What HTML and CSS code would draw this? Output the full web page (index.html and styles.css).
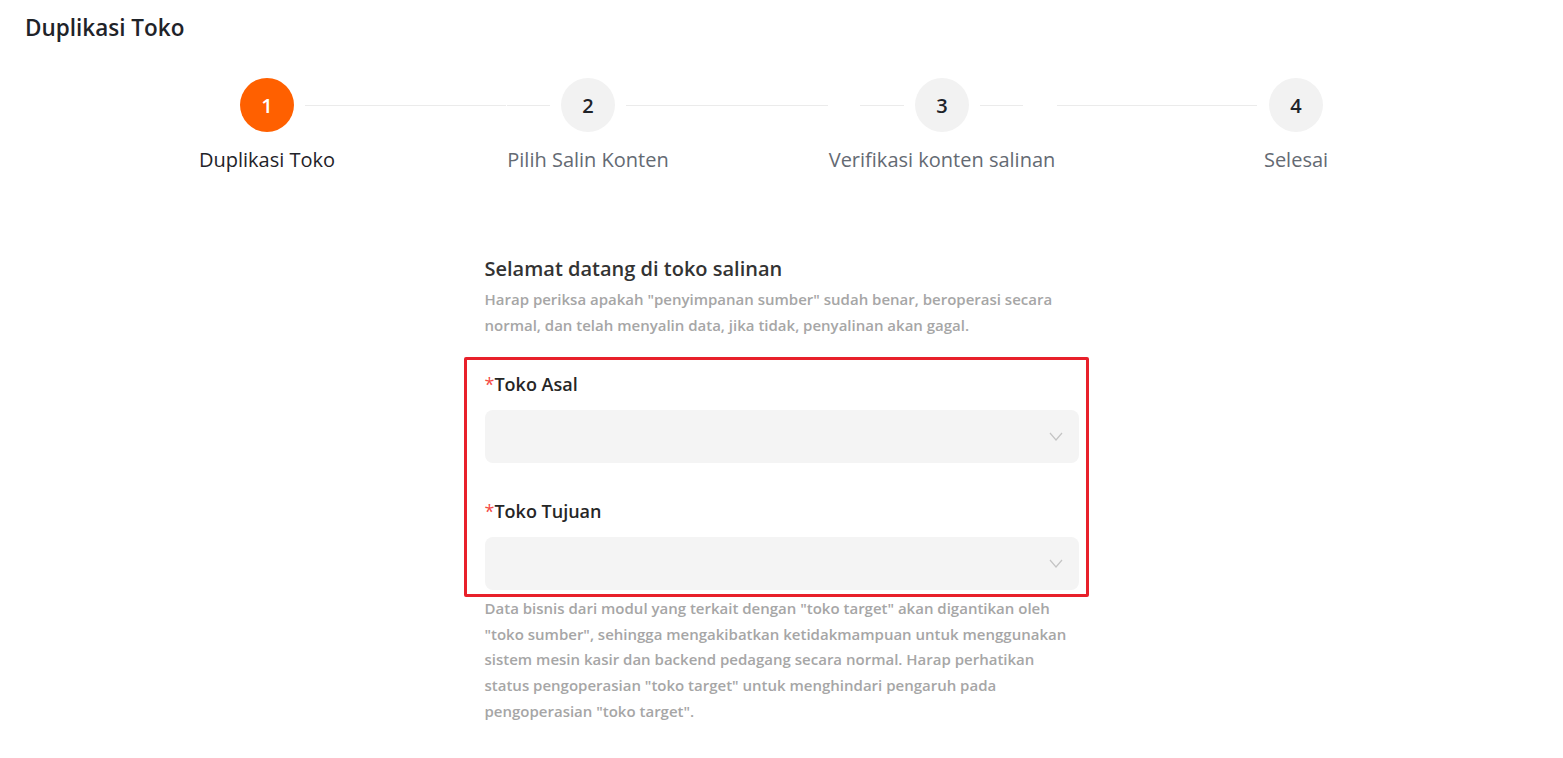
FILE: index.html
```html
<!DOCTYPE html>
<html>
  <head>
    <meta charset="utf-8" />
    <title>Duplikasi Toko</title>
    <meta name="viewport" content="width=device-width, initial-scale=1" />
    <link rel="stylesheet" href="styles.css">
  </head>

  <body>
    <h1 class="page-title">Duplikasi Toko</h1>

    <div class="steps">
      <div class="step active">
        <span class="step-num">1</span>
        <span class="step-label">Duplikasi Toko</span>
      </div>
      <div class="step-line line-1">
        <span class="seg seg-a"></span>
        <span class="seg seg-b"></span>
      </div>
      <div class="step">
        <span class="step-num">2</span>
        <span class="step-label">Pilih Salin Konten</span>
      </div>
      <div class="step-line line-2">
        <span class="seg seg-a"></span>
        <span class="seg seg-b"></span>
      </div>
      <div class="step">
        <span class="step-num">3</span>
        <span class="step-label">Verifikasi konten salinan</span>
      </div>
      <div class="step-line line-3">
        <span class="seg seg-a"></span>
        <span class="seg seg-b"></span>
      </div>
      <div class="step">
        <span class="step-num">4</span>
        <span class="step-label">Selesai</span>
      </div>
    </div>

    <div class="copy-form">
      <h2>Selamat datang di toko salinan</h2>
      <p class="hint">
        Harap periksa apakah "penyimpanan sumber" sudah benar, beroperasi secara
        normal, dan telah menyalin data, jika tidak, penyalinan akan gagal.
      </p>

      <div class="fields">
        <label class="field-label"><span class="req">*</span>Toko Asal</label>
        <div class="select">
          <svg class="arrow" width="14" height="9" viewBox="0 0 14 9">
            <polyline points="1,1 7,8 13,1" fill="none" stroke="#c4c4c4" stroke-width="1.2" />
          </svg>
        </div>

        <label class="field-label second"><span class="req">*</span>Toko Tujuan</label>
        <div class="select">
          <svg class="arrow" width="14" height="9" viewBox="0 0 14 9">
            <polyline points="1,1 7,8 13,1" fill="none" stroke="#c4c4c4" stroke-width="1.2" />
          </svg>
        </div>

        <div class="mark"></div>
      </div>

      <p class="hint note">
        Data bisnis dari modul yang terkait dengan "toko target" akan digantikan oleh
        "toko sumber", sehingga mengakibatkan ketidakmampuan untuk menggunakan
        sistem mesin kasir dan backend pedagang secara normal. Harap perhatikan
        status pengoperasian "toko target" untuk menghindari pengaruh pada
        pengoperasian "toko target".
      </p>
    </div>
  </body>
</html>
```

FILE: styles.css
```css
* {
  margin: 0;
  padding: 0;
  box-sizing: border-box;
}

body {
  font-family: "Open Sans", "Noto Sans", sans-serif;
  background-color: #fff;
  color: #1f2329;
}

.page-title {
  font-size: 22.5px;
  font-weight: 600;
  line-height: 28px;
  padding: 14px 25px 0;
}

/* stepper */
.steps {
  display: flex;
  justify-content: center;
  margin-top: 36px;
}

.step {
  width: 54px;
  display: flex;
  flex-direction: column;
  align-items: center;
}

.step-num {
  width: 54px;
  height: 54px;
  border-radius: 50%;
  background-color: #f2f2f2;
  display: flex;
  align-items: center;
  justify-content: center;
  font-size: 20px;
  font-weight: 600;
  color: #1f2329;
}

.step.active .step-num {
  background-color: #ff6000;
  color: #fff;
}

.step-label {
  margin-top: 14px;
  font-size: 20px;
  line-height: 28px;
  white-space: nowrap;
  color: #646a73;
}

.step.active .step-label {
  color: #1f2329;
}

.step-line {
  height: 54px;
  display: flex;
  align-items: center;
  padding: 0 11px;
}

.seg {
  height: 1px;
  background-color: #ebebeb;
}

.line-1 {
  width: 267px;
}

.line-1 .seg-a {
  width: 201px;
}

.line-1 .seg-b {
  width: 43px;
  margin-left: 1px;
}

.line-2,
.line-3 {
  width: 300px;
}

.line-2 .seg-a {
  width: 202px;
}

.line-2 .seg-b {
  width: 44px;
  margin-left: 32px;
}

.line-3 .seg-a {
  width: 43px;
}

.line-3 .seg-b {
  width: 200px;
  margin-left: 34px;
}

/* form */
.copy-form {
  width: 594px;
  margin: 81px auto 0;
}

.copy-form h2 {
  font-size: 20px;
  font-weight: 600;
  line-height: 28px;
  color: #333;
}

.hint {
  margin-top: 3px;
  font-size: 15px;
  font-weight: 600;
  line-height: 26px;
  color: #a6a6a6;
}

.fields {
  position: relative;
  margin-top: 33px;
}

.field-label {
  display: block;
  font-size: 18px;
  font-weight: 600;
  line-height: 26px;
  color: #262626;
}

.field-label.second {
  margin-top: 35px;
}

.req {
  color: #f54a45;
  font-weight: 400;
}

.select {
  margin-top: 13px;
  height: 53px;
  border-radius: 8px;
  background-color: #f4f4f4;
  display: flex;
  align-items: center;
  justify-content: flex-end;
  padding-right: 16px;
}

.mark {
  position: absolute;
  top: -14px;
  bottom: -7px;
  left: -21px;
  right: -10px;
  border: 3px solid #e8202a;
  border-radius: 2px;
}

.note {
  margin-top: 6px;
  line-height: 25.7px;
}
```
